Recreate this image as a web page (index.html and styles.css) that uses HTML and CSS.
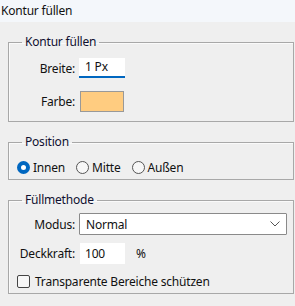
FILE: index.html
```html
<!DOCTYPE html>
<html lang="de">
<head>
    <meta charset="UTF-8">
    <title>Kontur füllen</title>
    <link rel="stylesheet" href="styles.css">
</head>
<body>
    <div class="titlebar">Kontur füllen</div>

    <fieldset class="group">
        <legend>Kontur füllen</legend>
        <div class="row first">
            <label class="lbl">Breite:</label>
            <div class="field width-field">1 Px</div>
        </div>
        <div class="row swatch-row">
            <label class="lbl">Farbe:</label>
            <div class="swatch"></div>
        </div>
    </fieldset>

    <fieldset class="group">
        <legend>Position</legend>
        <div class="radios">
            <span class="radio checked"></span><span class="radio-text">Innen</span>
            <span class="radio"></span><span class="radio-text">Mitte</span>
            <span class="radio"></span><span class="radio-text">Außen</span>
        </div>
    </fieldset>

    <fieldset class="group">
        <legend>Füllmethode</legend>
        <div class="row mode-row">
            <label class="lbl">Modus:</label>
            <div class="select">
                <span>Normal</span>
                <svg width="10" height="6" viewBox="0 0 10 6"><polyline points="0.5,0.5 5,5 9.5,0.5" fill="none" stroke="#555" stroke-width="1"/></svg>
            </div>
        </div>
        <div class="row opacity-row">
            <label class="lbl">Deckkraft:</label>
            <div class="field opacity-field">100</div>
            <span class="unit">%</span>
        </div>
        <div class="check-row">
            <span class="checkbox"></span>
            <span>Transparente Bereiche schützen</span>
        </div>
    </fieldset>
</body>
</html>
```

FILE: styles.css
```css
body {
    margin: 0;
    background: #efefef;
    font-family: "Noto Sans", sans-serif;
    font-size: 12px;
    letter-spacing: -0.2px;
    color: #111;
}
.titlebar {
    height: 22px;
    line-height: 21px;
    padding-left: 1px;
    background: #f4f7fb;
}
.group {
    margin: 12px 1px 0 8px;
    padding: 0;
    border: 1px solid #a8a8a8;
    box-shadow: inset 1px 1px 0 #fafafa;
}
.group legend {
    margin-left: 13px;
    padding: 0 3px;
    line-height: 16px;
    color: #101030;
}
.row {
    display: flex;
    align-items: center;
}
.lbl {
    width: 66px;
    text-align: right;
    margin-right: 4px;
}
.first {
    margin-top: 8px;
    height: 20px;
}
.field {
    background: #fff;
    box-sizing: border-box;
}
.width-field {
    width: 46px;
    height: 20px;
    line-height: 18px;
    padding-left: 6px;
    border-bottom: 2px solid #0067c0;
}
.swatch-row {
    margin-top: 13px;
    margin-bottom: 9px;
}
.swatch {
    width: 44px;
    height: 21px;
    margin-left: 1px;
    box-sizing: border-box;
    background: #ffcc80;
    border: 1px solid #999;
}
.radios {
    display: flex;
    align-items: center;
    height: 18px;
    margin: 8px 0 3px 8px;
}
.radio {
    width: 13px;
    height: 13px;
    box-sizing: border-box;
    border: 1px solid #555;
    border-radius: 50%;
    background: #f7f7f7;
    margin-right: 3px;
}
.radio.checked {
    border: 4px solid #0067c0;
    background: #fff;
}
.radio-text {
    margin-right: 11px;
}
.mode-row {
    margin-top: 5px;
}
.select {
    flex: 1;
    height: 22px;
    margin-right: 6px;
    box-sizing: border-box;
    background: #fff;
    border: 1px solid #8a8a8a;
    border-radius: 1px;
    display: flex;
    align-items: center;
    justify-content: space-between;
    padding: 0 6px;
}
.opacity-row {
    margin-top: 8px;
}
.opacity-field {
    width: 45px;
    height: 21px;
    line-height: 21px;
    margin-left: 1px;
    padding-left: 5px;
}
.unit {
    margin-left: 11px;
}
.check-row {
    display: flex;
    align-items: center;
    height: 18px;
    margin: 8px 0 3px 8px;
}
.checkbox {
    width: 13px;
    height: 13px;
    box-sizing: border-box;
    border: 1px solid #444;
    border-radius: 2px;
    background: #f7f7f7;
    margin-right: 5px;
}
```
